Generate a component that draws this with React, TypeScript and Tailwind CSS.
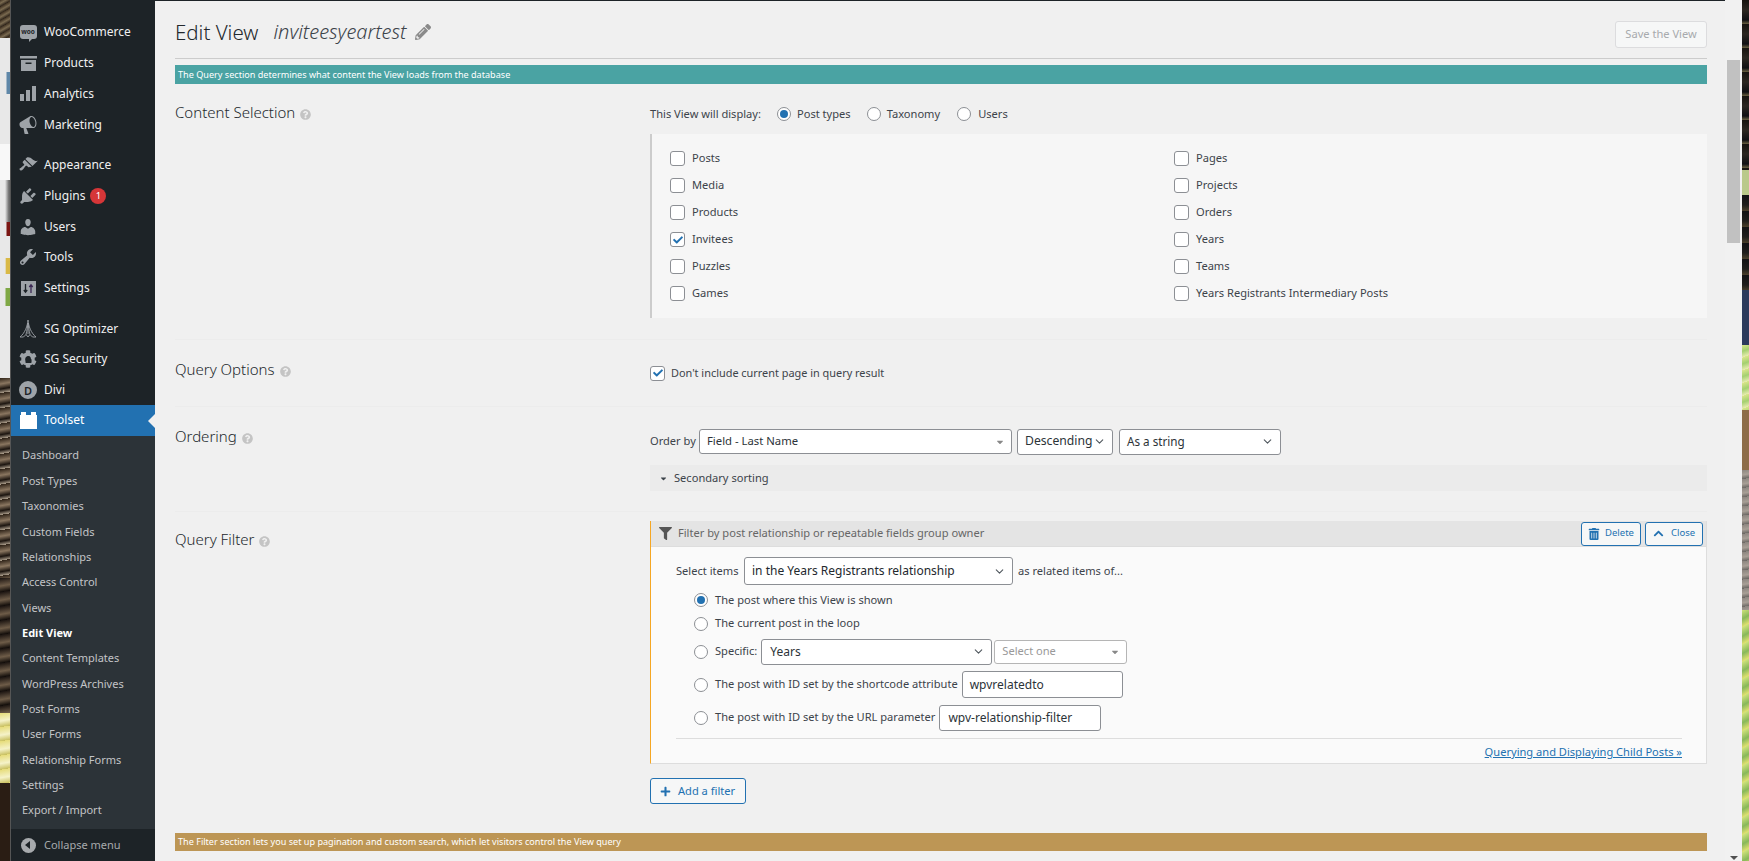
import { FaChevronUp, FaFilter, FaPencilAlt, FaPlus, FaQuestionCircle, FaTrashAlt, FaCheck, FaCog, FaLock, FaCaretDown } from "react-icons/fa";
import { ChevronDown } from "lucide-react";

const sans = "font-['Noto_Sans',sans-serif]";

function WooIcon() {
  return (
    <span className="relative flex h-[14px] w-[17px] items-center justify-center rounded-[3px] bg-[#9ea3a8] text-[6.5px] font-bold leading-none text-[#1d2327]">
      woo
      <span className="absolute -bottom-[3px] left-[9px] h-0 w-0 border-r-[3px] border-t-[3px] border-r-transparent border-t-[#9ea3a8]" />
    </span>
  );
}

function ProductsIcon() {
  return (
    <svg width="17" height="15" viewBox="0 0 17 15" fill="#9ea3a8">
      <rect x="0" y="0" width="17" height="2.5" />
      <path d="M1 4h15v11H1zM5.5 6.5v1.5h6V6.5z" fillRule="evenodd" />
    </svg>
  );
}

function AnalyticsIcon() {
  return (
    <svg width="16" height="16" viewBox="0 0 16 16" fill="#9ea3a8">
      <rect x="0" y="8" width="4" height="7" />
      <rect x="6" y="4" width="4" height="11" />
      <rect x="12" y="0" width="4" height="15" />
    </svg>
  );
}

function Dash({ d }: { d: string }) {
  return (
    <svg width="20" height="20" viewBox="0 0 20 20" fill="#9ea3a8" fillRule="evenodd">
      <path d={d} />
    </svg>
  );
}

const marketingPath =
  "M18.15 5.94c.46 1.62.38 3.22-.02 4.48-.42 1.28-1.26 2.18-2.3 2.48-.16.06-.26.06-.4.06-.06.02-.12.02-.18.02-.06.02-.14.02-.22.02h-6.8l2.22 5.5c.02.14-.06.26-.14.34-.08.1-.24.16-.34.16H6.95c-.1 0-.26-.06-.34-.16-.08-.08-.16-.2-.14-.34l-1-5.5H4.25l-.02-.02c-.5.06-1.08-.18-1.54-.62s-.88-1.08-1.06-1.88c-.24-.8-.2-1.56-.02-2.2.18-.62.58-1.08 1.06-1.3l.02-.02 9-5.4c.1-.06.18-.1.24-.16.06-.04.14-.08.24-.12.16-.08.28-.12.5-.18 1.04-.3 2.24.1 3.22.98s1.84 2.24 2.26 3.86zm-2.58 5.98h-.02c.4-.1.74-.34 1.04-.7.58-.7.86-1.76.86-3.04-.02-.64-.1-1.3-.28-1.98-.34-1.36-1.02-2.5-1.78-3.24-.38-.38-.8-.64-1.18-.78-.18-.06-.36-.1-.54-.1-.1 0-.2 0-.3.02-.38.08-.74.34-1.04.7-.58.7-.86 1.76-.86 3.04.02.64.1 1.3.28 1.98.34 1.36 1.02 2.5 1.78 3.24.38.38.8.64 1.18.78.18.06.36.1.54.1.1 0 .2 0 .32-.02z";
const appearancePath =
  "M14.48 11.06L7.41 3.99l1.5-1.5c.5-.56 2.3-.47 3.51.32 1.21.8 1.43 1.28 2.91 2.1 1.18.64 2.45 1.26 4.45.85zm-.71.71L6.7 4.7 4.93 6.47c-.39.39-.39 1.02 0 1.41l1.06 1.06c.39.39.39 1.03 0 1.42-.6.6-1.43 1.11-2.21 1.69-.35.26-.7.53-1.01.84C1.43 13.23 1 14.09 2 15c.91 1 1.77.57 3.11-.77.31-.31.58-.66.84-1.01.58-.78 1.09-1.61 1.69-2.21.39-.39 1.03-.39 1.42 0l1.06 1.06c.39.39 1.02.39 1.41 0z";
const pluginsPath =
  "M13.11 4.36L9.87 7.6 8 5.73l3.24-3.24c.35-.34 1.05-.2 1.56.32.52.51.66 1.21.31 1.55zm-8 1.77l.91-1.12 9.01 9.01-1.19.84c-.71.71-2.63 1.16-3.82 1.16H6.14L4.9 17.26c-.59.59-1.54.59-2.12 0-.59-.58-.59-1.53 0-2.12l1.24-1.24v-3.88c0-1.13.4-3.19 1.09-3.89zm7.26 3.97l3.24-3.24c.34-.35 1.04-.21 1.55.31.52.51.66 1.21.31 1.55l-3.24 3.25z";
const usersPath =
  "M10 9.25c-2.27 0-2.73-3.44-2.73-3.44C7 4.02 7.82 2 9.97 2c2.16 0 2.98 2.02 2.71 3.81 0 0-.41 3.44-2.68 3.44zm0 2.57L12.72 10c2.39 0 4.52 2.33 4.52 4.53v2.49s-3.65 1.13-7.24 1.13c-3.65 0-7.24-1.13-7.24-1.13v-2.49c0-2.25 1.94-4.48 4.47-4.48z";
const toolsPath =
  "M16.68 9.77c-1.34 1.34-3.3 1.67-4.95.99l-5.41 6.52c-.99.99-2.59.99-3.58 0s-.99-2.59 0-3.57l6.52-5.42c-.68-1.65-.35-3.61.99-4.95 1.28-1.28 3.12-1.62 4.72-1.06l-2.89 2.89 2.82 2.82 2.86-2.87c.53 1.58.18 3.39-1.08 4.65zM3.81 16.21c.4.39 1.04.39 1.43 0 .4-.4.4-1.04 0-1.43-.39-.4-1.03-.4-1.43 0-.39.39-.39 1.03 0 1.43z";

function SettingsIcon() {
  return (
    <svg width="15" height="15" viewBox="0 0 15 15">
      <rect width="15" height="15" fill="#9ea3a8" />
      <path d="M4.5 3v8M2.8 9l1.7 2.2L6.2 9" stroke="#1d2327" strokeWidth="1.3" fill="none" />
      <path d="M10 12V4M8.3 6L10 3.8 11.7 6" stroke="#3d2a55" strokeWidth="1.3" fill="none" />
    </svg>
  );
}

function OptimizerIcon() {
  return (
    <svg width="16" height="18" viewBox="0 0 16 18" fill="none" stroke="#9ea3a8" strokeWidth="0.9">
      <path d="M8 0C7.5 6 5 13 0 17h3.5L6 14.5 8 17l2-2.5 2.5 2.5H16C11 13 8.5 6 8 0z" />
      <path d="M8 3v11M6 14.5C7 10 7.5 7 8 3c.5 4 1 7 2 11.5" />
    </svg>
  );
}

function SecurityIcon() {
  return (
    <span className="relative flex h-[18px] w-[18px] items-center justify-center">
      <FaCog size={18} color="#9ea3a8" />
      <FaLock size={7} color="#1d2327" className="absolute" />
    </span>
  );
}

function DiviIcon() {
  return (
    <span className="flex h-[18px] w-[18px] items-center justify-center rounded-full border-[3px] border-[#9ea3a8] bg-[#9ea3a8] text-[11px] font-semibold leading-none text-[#1d2327]">
      D
    </span>
  );
}

function ToolsetIcon() {
  return (
    <svg width="17" height="18" viewBox="0 0 17 18" fill="#fff">
      <path d="M0 4h1V1h5v3h5V1h5v3h1v14H0z" />
    </svg>
  );
}

const menuGroups = [
  [
    { label: "WooCommerce", icon: <WooIcon /> },
    { label: "Products", icon: <ProductsIcon /> },
    { label: "Analytics", icon: <AnalyticsIcon /> },
    { label: "Marketing", icon: <Dash d={marketingPath} /> },
  ],
  [
    { label: "Appearance", icon: <Dash d={appearancePath} /> },
    { label: "Plugins", icon: <Dash d={pluginsPath} />, badge: "1" },
    { label: "Users", icon: <Dash d={usersPath} /> },
    { label: "Tools", icon: <Dash d={toolsPath} /> },
    { label: "Settings", icon: <SettingsIcon /> },
  ],
  [
    { label: "SG Optimizer", icon: <OptimizerIcon /> },
    { label: "SG Security", icon: <SecurityIcon /> },
    { label: "Divi", icon: <DiviIcon /> },
  ],
];

const subItems = [
  "Dashboard",
  "Post Types",
  "Taxonomies",
  "Custom Fields",
  "Relationships",
  "Access Control",
  "Views",
  "Edit View",
  "Content Templates",
  "WordPress Archives",
  "Post Forms",
  "User Forms",
  "Relationship Forms",
  "Settings",
  "Export / Import",
];

function Sidebar() {
  return (
    <aside className={`flex w-[144px] shrink-0 flex-col bg-[#1d2327] pt-[17px] text-[12px] text-[#f0f0f1] ${sans}`}>
      {menuGroups.map((group, i) => (
        <div key={i} className="mb-[9.5px]">
          {group.map((item) => (
            <div key={item.label} className="flex h-[30.8px] items-center">
              <span className="flex w-[33px] shrink-0 items-center justify-center pl-[1px]">{item.icon}</span>
              <span>{item.label}</span>
              {item.badge && (
                <span className="ml-[5px] flex h-[16px] w-[16px] items-center justify-center rounded-full bg-[#d63638] text-[9.5px] text-white">
                  {item.badge}
                </span>
              )}
            </div>
          ))}
        </div>
      ))}
      <div className="relative -mt-[10.5px] flex h-[31px] items-center bg-[#2271b1] text-white">
        <span className="flex w-[33px] shrink-0 items-center justify-center pl-[1px]">
          <ToolsetIcon />
        </span>
        <span>Toolset</span>
        <span className="absolute right-0 top-[9px] h-0 w-0 border-y-[7px] border-r-[7px] border-y-transparent border-r-[#f0f0f0]" />
      </div>
      <div className="bg-[#2c3338] pb-[6px] pt-[7.5px]">
        {subItems.map((s) => (
          <div
            key={s}
            className={`flex h-[25.35px] items-center pl-[11px] text-[11px] ${s === "Edit View" ? "font-bold text-white" : "text-[#c3c4c7]"}`}
          >
            {s}
          </div>
        ))}
      </div>
      <div className="flex flex-1 items-center text-[11px] text-[#a7aaad]">
        <span className="flex w-[33px] shrink-0 items-center justify-center pl-[1px]">
          <span className="flex h-[15px] w-[15px] items-center justify-center rounded-full bg-[#a7aaad]">
            <span className="mr-[2px] h-0 w-0 border-y-[4px] border-r-[5px] border-y-transparent border-r-[#1d2327]" />
          </span>
        </span>
        Collapse menu
      </div>
    </aside>
  );
}

function Help() {
  return <FaQuestionCircle size={11} color="#c4c4c4" className="ml-[5px] inline-block" />;
}

function Checkbox({ checked = false }: { checked?: boolean }) {
  return (
    <span className="relative flex h-[15px] w-[15px] shrink-0 items-center justify-center rounded-[3px] border border-[#8c8f94] bg-white">
      {checked && <FaCheck size={10} color="#2271b1" />}
    </span>
  );
}

function Radio({ checked = false }: { checked?: boolean }) {
  return (
    <span className="flex h-[14px] w-[14px] shrink-0 items-center justify-center rounded-full border border-[#8c8f94] bg-white">
      {checked && <span className="h-[8px] w-[8px] rounded-full bg-[#2271b1]" />}
    </span>
  );
}

function Select({ value, className, muted = false, caret = false }: { value: string; className: string; muted?: boolean; caret?: boolean }) {
  return (
    <div className={`flex items-center justify-between whitespace-nowrap rounded-[3px] border bg-white pr-[6px] ${muted ? "border-[#b5b5b5] text-[#999]" : "border-[#8c8f94] text-[#2c3338]"} ${className}`}>
      <span>{value}</span>
      {caret ? <FaCaretDown size={10} color="#888" /> : <ChevronDown size={13} color="#50575e" strokeWidth={2} />}
    </div>
  );
}

function Row({ title, className, children }: { title: string; className: string; children: React.ReactNode }) {
  return (
    <div className={`flex border-b border-[#ececec] ${className}`}>
      <div className="w-[475px] shrink-0 text-[15px] font-light leading-[20px] text-[#23282d]">
        {title}
        <Help />
      </div>
      <div className="min-w-0 flex-1">{children}</div>
    </div>
  );
}

const leftTypes = ["Posts", "Media", "Products", "Invitees", "Puzzles", "Games"];
const rightTypes = ["Pages", "Projects", "Orders", "Years", "Teams", "Years Registrants Intermediary Posts"];

function PostTypeColumn({ items }: { items: string[] }) {
  return (
    <div className="flex flex-col">
      {items.map((t) => (
        <div key={t} className="flex h-[27px] items-center gap-[7px]">
          <Checkbox checked={t === "Invitees"} />
          <span>{t}</span>
        </div>
      ))}
    </div>
  );
}

function FilterRadio({ label, checked, className, children }: { label: string; checked?: boolean; className: string; children?: React.ReactNode }) {
  return (
    <div className={`flex items-center ${className}`}>
      <Radio checked={checked} />
      <span className="ml-[7px] mr-[4px] whitespace-nowrap">{label}</span>
      {children}
    </div>
  );
}

function Main() {
  return (
    <main className={`flex min-w-0 flex-1 flex-col overflow-hidden border-t border-[#1d2327] bg-[#f0f0f0] pl-[20px] pr-[18px] text-[11.1px] text-[#3c434a] ${sans}`}>
      <header className="flex h-[58px] shrink-0 items-start justify-between border-b border-[#cccccc]">
        <div className="mt-[18px] flex items-center text-[#3c434a]">
          <span className="text-[20.5px] font-light leading-[26px] text-[#23282d]">Edit View</span>
          <span className="ml-[15px] text-[20px] font-light italic leading-[26px]">inviteesyeartest</span>
          <FaPencilAlt size={16} color="#8a8a8a" className="ml-[9px]" />
        </div>
        <button className="mt-[20px] h-[27px] w-[92px] rounded-[3px] border border-[#dcdcde] bg-[#f6f7f7] text-[11.1px] text-[#a7aaad]">
          Save the View
        </button>
      </header>

      <div className="mt-[6px] flex h-[19px] shrink-0 items-center bg-[#4aa3a3] pl-[3px] text-[9.1px] text-white">
        The Query section determines what content the View loads from the database
      </div>

      <Row title="Content Selection" className="h-[256px] shrink-0 pt-[18px]">
        <div className="mt-[1px] flex h-[22px] items-center">
          <span className="mr-[16px]">This View will display:</span>
          <Radio checked />
          <span className="ml-[6px] mr-[16px]">Post types</span>
          <Radio />
          <span className="ml-[6px] mr-[17px]">Taxonomy</span>
          <Radio />
          <span className="ml-[7px]">Users</span>
        </div>
        <div className="mt-[9px] flex h-[184px] border-l-[2px] border-[#cccccc] bg-[#f6f6f6] pl-[18px] pt-[11px]">
          <div className="w-[504px]">
            <PostTypeColumn items={leftTypes} />
          </div>
          <PostTypeColumn items={rightTypes} />
        </div>
      </Row>

      <Row title="Query Options" className="h-[67px] shrink-0 pt-[19px]">
        <div className="mt-[2px] flex h-[24px] items-center gap-[6px] text-[10.9px]">
          <Checkbox checked />
          <span>Don't include current page in query result</span>
        </div>
      </Row>

      <Row title="Ordering" className="h-[105px] shrink-0 pt-[19px]">
        <div className="mt-[2px] flex h-[27px] items-center">
          <span className="w-[49px] shrink-0">Order by</span>
          <Select value="Field - Last Name" caret className="h-[25px] w-[313px] pl-[7px] text-[11.3px]" />
          <Select value="Descending" className="ml-[5px] h-[26px] w-[96px] pl-[7px] text-[12.2px]" />
          <Select value="As a string" className="ml-[6px] h-[26px] w-[162px] pl-[7px] text-[11.7px]" />
        </div>
        <div className="mt-[10px] flex h-[26px] items-center gap-[6px] bg-[#ebebeb] pl-[9px]">
          <FaCaretDown size={9} color="#3c434a" />
          Secondary sorting
        </div>
      </Row>

      <div className="flex shrink-0 pt-[8px]">
        <div className="mt-[9px] w-[475px] shrink-0 text-[15px] font-light leading-[20px] text-[#23282d]">
          Query Filter
          <Help />
        </div>
        <div className="mt-[1px] min-w-0 flex-1">
          <section className="h-[243px] border-b border-r border-[#dddddd] border-l-[1.5px] border-l-[#f5a623] bg-[#fafafa]">
            <div className="flex h-[26px] items-center justify-between border-b border-[#dddddd] bg-[#e4e4e4] pl-[8px] pr-[3px] text-[#666]">
              <div className="flex items-center gap-[6px]">
                <FaFilter size={13} color="#555" />
                Filter by post relationship or repeatable fields group owner
              </div>
              <div className="flex gap-[4px] text-[9.5px] text-[#2271b1]">
                <button className="flex h-[24px] w-[60px] items-center justify-center gap-[5px] rounded-[3px] border border-[#2271b1] bg-[#f6f7f7]">
                  <FaTrashAlt size={12} />
                  Delete
                </button>
                <button className="flex h-[24px] w-[58px] items-center justify-center gap-[7px] rounded-[3px] border border-[#2271b1] bg-[#f6f7f7]">
                  <FaChevronUp size={11} />
                  Close
                </button>
              </div>
            </div>
            <div className="pl-[25px] pr-[24px]">
              <div className="mt-[10px] flex h-[28px] items-center">
                <span className="w-[68px] shrink-0">Select items</span>
                <Select value="in the Years Registrants relationship" className="h-[28px] w-[269px] pl-[7px] text-[12px] text-[#23282d]" />
                <span className="ml-[5px]">as related items of...</span>
              </div>
              <div className="pl-[18px]">
                <FilterRadio label="The post where this View is shown" checked className="mt-[3px] h-[24px]" />
                <FilterRadio label="The current post in the loop" className="h-[23px]" />
                <FilterRadio label="Specific:" className="mt-[3px] h-[27px]">
                  <Select value="Years" className="h-[26px] w-[231px] pl-[8px] text-[12px]" />
                  <Select value="Select one" muted caret className="ml-[2px] h-[24px] w-[133px] pl-[7px]" />
                </FilterRadio>
                <FilterRadio label="The post with ID set by the shortcode attribute" className="mt-[6px] h-[27px]">
                  <div className="flex h-[27px] w-[161px] items-center rounded-[3px] border border-[#8c8f94] bg-white pl-[7px] text-[12px] text-[#2c3338]">wpvrelatedto</div>
                </FilterRadio>
                <FilterRadio label="The post with ID set by the URL parameter" className="mt-[6px] h-[27px]">
                  <div className="flex h-[26px] w-[162px] items-center rounded-[3px] border border-[#8c8f94] bg-white pl-[8px] text-[12px] text-[#2c3338]">wpv-relationship-filter</div>
                </FilterRadio>
              </div>
              <div className="mt-[7px] border-t border-[#dddddd] pt-[5px] text-right">
                <a className="text-[#2271b1] underline">Querying and Displaying Child Posts »</a>
              </div>
            </div>
          </section>
          <button className="mt-[14px] flex h-[26px] w-[96px] items-center gap-[7px] rounded-[3px] border border-[#2271b1] bg-[#f6f7f7] pl-[9px] text-[#2271b1]">
            <FaPlus size={11} />
            Add a filter
          </button>
        </div>
      </div>

      <div className="mt-[29px] flex h-[18px] shrink-0 items-center bg-[#bd9655] pl-[3px] text-[9.1px] text-white">
        The Filter section lets you set up pagination and custom search, which let visitors control the View query
      </div>
    </main>
  );
}

function Scrollbar() {
  return (
    <div className="flex w-[17px] shrink-0 flex-col bg-[#f1f1f1] pl-[2px] pr-[2px] pt-[60px]">
      <div className="h-[183px] bg-[#c1c1c1]" />
      <div className="flex-1" />
      <div className="mx-auto mb-[1px] h-0 w-0 border-x-[4px] border-t-[4px] border-x-transparent border-t-[#505050]" />
    </div>
  );
}

// background wallpaper peeking out on both sides of the browser window
const leftBands = [
  "h-[38px] bg-[repeating-linear-gradient(150deg,#3f3122_0px,#7a6a50_3px,#2e241a_6px)]",
  "h-[34px] bg-[#e8e8e8]",
  "h-[22px] bg-[linear-gradient(90deg,#e8e8e8_55%,#5f87a8_75%)]",
  "h-[50px] bg-[#e8e8e8]",
  "h-[36px] bg-[#f8f8f8]",
  "h-[42px] bg-[linear-gradient(90deg,#e8e8e8_50%,#6a6a6a_90%)]",
  "h-[14px] bg-[linear-gradient(90deg,#e8e8e8_60%,#7a1512_70%)]",
  "h-[22px] bg-[#e8e8e8]",
  "h-[16px] bg-[linear-gradient(90deg,#e8e8e8_50%,#d9b946_65%)]",
  "h-[14px] bg-[#e8e8e8]",
  "h-[18px] bg-[linear-gradient(90deg,#e8e8e8_50%,#7fa845_60%)]",
  "h-[72px] bg-[#e8e8e8]",
  "h-[200px] bg-[repeating-linear-gradient(170deg,#2f2318_0px,#8a7660_6px,#1c1510_11px,#a89a88_15px)]",
  "h-[135px] bg-[repeating-linear-gradient(170deg,#1a1310_0px,#6e5c48_8px,#120d0a_14px)]",
  "h-[70px] bg-[repeating-linear-gradient(170deg,#e6dc7a_0px,#f5f2c8_8px,#c9c060_14px)]",
  "flex-1 bg-[#2a1d14]",
];

const rightBands = [
  "h-[170px] bg-[repeating-linear-gradient(180deg,#17130f_0px,#2b2620_10px,#0f0f12_20px,#6a6040_24px)]",
  "h-[25px] bg-[#b9c98a]",
  "h-[95px] bg-[repeating-linear-gradient(180deg,#121214_0px,#1f1e1c_10px,#4a3f2a_16px)]",
  "h-[55px] bg-[#2c3a5c]",
  "h-[65px] bg-[repeating-linear-gradient(160deg,#d8e58a_0px,#a4d070_6px,#e8ecb0_12px)]",
  "h-[60px] bg-[#8d6c48]",
  "h-[140px] bg-[repeating-linear-gradient(170deg,#8d8680_0px,#a89f96_5px,#6c6864_9px)]",
  "flex-1 bg-[repeating-linear-gradient(150deg,#cfe27a_0px,#88b85a_8px,#e0e070_15px)]",
];

function LeftWallpaper() {
  return (
    <div className="flex w-[11px] shrink-0 flex-col overflow-hidden border-r border-[#555]">
      {leftBands.map((b) => (
        <div key={b} className={b} />
      ))}
    </div>
  );
}

function RightWallpaper() {
  return (
    <div className="flex w-[7px] shrink-0 flex-col overflow-hidden">
      {rightBands.map((b) => (
        <div key={b} className={b} />
      ))}
    </div>
  );
}

export default function App() {
  return (
    <div className="flex h-[861px] w-[1749px] overflow-hidden">
      <LeftWallpaper />
      <Sidebar />
      <Main />
      <Scrollbar />
      <RightWallpaper />
    </div>
  );
}
